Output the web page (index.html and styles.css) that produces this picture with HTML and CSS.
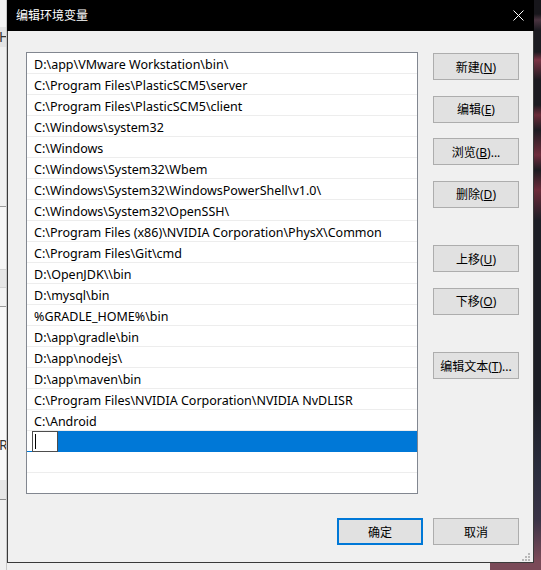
FILE: index.html
```html
<!DOCTYPE html>
<html lang="zh-CN">
<head>
<meta charset="UTF-8" />
<title>编辑环境变量</title>
<link rel="stylesheet" href="styles.css">
</head>
<body>

<div class="behind">
	<div class="strip s1"></div>
	<div class="strip s2"><span>H</span></div>
	<div class="strip s3"></div>
	<div class="strip s4"></div>
	<div class="strip s5"></div>
	<div class="strip s6"></div>
	<div class="strip s7"><span>R</span></div>
	<div class="strip s8"></div>
	<div class="strip s9"></div>
</div>

<div class="dialog">
	<div class="titlebar">
		<span class="title">编辑环境变量</span>
		<svg class="close" width="11" height="11" viewBox="0 0 11 11">
			<path d="M0.5 0.5 L10.5 10.5 M10.5 0.5 L0.5 10.5" stroke="#fff" stroke-width="1" fill="none"/>
		</svg>
	</div>

	<div class="content">
		<div class="main">
			<ul class="pathlist">
				<li>D:\app\VMware Workstation\bin\</li>
				<li>C:\Program Files\PlasticSCM5\server</li>
				<li>C:\Program Files\PlasticSCM5\client</li>
				<li>C:\Windows\system32</li>
				<li>C:\Windows</li>
				<li>C:\Windows\System32\Wbem</li>
				<li>C:\Windows\System32\WindowsPowerShell\v1.0\</li>
				<li>C:\Windows\System32\OpenSSH\</li>
				<li>C:\Program Files (x86)\NVIDIA Corporation\PhysX\Common</li>
				<li>C:\Program Files\Git\cmd</li>
				<li>D:\OpenJDK\\bin</li>
				<li>D:\mysql\bin</li>
				<li>%GRADLE_HOME%\bin</li>
				<li>D:\app\gradle\bin</li>
				<li>D:\app\nodejs\</li>
				<li>D:\app\maven\bin</li>
				<li>C:\Program Files\NVIDIA Corporation\NVIDIA NvDLISR</li>
				<li>C:\Android</li>
				<li class="selected"><span class="editbox"><span class="caret"></span></span></li>
				<li></li>
				<li></li>
			</ul>

			<div class="side">
				<button>新建(<u>N</u>)</button>
				<button>编辑(<u>E</u>)</button>
				<button>浏览(<u>B</u>)...</button>
				<button>删除(<u>D</u>)</button>
				<button class="spaced">上移(<u>U</u>)</button>
				<button>下移(<u>O</u>)</button>
				<button class="spaced">编辑文本(<u>T</u>)...</button>
			</div>
		</div>

		<div class="footer">
			<button class="default">确定</button>
			<button>取消</button>
		</div>
	</div>

	<svg class="grip" width="8" height="8" viewBox="0 0 8 8">
		<rect x="6" y="0" width="2" height="2"/>
		<rect x="3" y="3" width="2" height="2"/>
		<rect x="6" y="3" width="2" height="2"/>
		<rect x="0" y="6" width="2" height="2"/>
		<rect x="3" y="6" width="2" height="2"/>
		<rect x="6" y="6" width="2" height="2"/>
	</svg>
</div>

</body>
</html>
```

FILE: styles.css
```css
* {
	margin: 0;
	padding: 0;
	box-sizing: border-box;
}

body {
	display: flex;
	height: 570px;
	overflow: hidden;
	font: 12px "Noto Sans", "Noto Sans CJK SC", sans-serif;
	color: #000;
	/* window behind the dialog on the left, wallpaper on the right */
	background:
		linear-gradient(90deg, #f0f0f0 490px, transparent 490px),
		linear-gradient(180deg, #17161b 0, #17161b 14px, #4a3440 20px, #1c1b21 30px, #1c1b21 52px,
			#7a3344 60px, #1b1a20 80px, #1b1a20 105px, #6a2a38 115px, #1d1c22 130px,
			#6f2c3c 155px, #1c1c22 170px, #6d2b3a 190px, #1d1e26 220px, #1d1e26 400px,
			#2a2d3d 470px, #3a3346 520px, #7a4a58 560px);
}

/* the window underneath */
.behind {
	width: 7px;
	flex: none;
	display: flex;
	flex-direction: column;
	overflow: hidden;
	border-right: 1px solid #c8c8c8;
}

.strip {
	flex: none;
	font-size: 14px;
	line-height: 20px;
	color: #333;
}

.s1 { height: 27px; background: #f3f3f3; }
.s2 { height: 20px; background: #e4e4e4; }
.s3 { height: 160px; background: #f0f0f0; border-bottom: 1px solid #9c9c9c; }
.s4 { height: 63px; background: #f6f6f6; border-bottom: 1px solid #d4d4d4; }
.s5 { height: 18px; background: #e6e6e6; border-bottom: 1px solid #d4d4d4; }
.s6 { height: 19px; background: #f3f3f3; border-bottom: 1px solid #9c9c9c; }
.s7 { height: 173px; background: #f8f8f8; padding-top: 128px; }
.s8 { height: 20px; background: #e6e6e6; border-bottom: 1px solid #8c8c8c; }
.s9 { flex: 1; background: #f0f0f0; }

.s2 span, .s7 span {
	display: block;
	margin-left: -1px;
}

/* dialog */
.dialog {
	width: 527px;
	height: 563px;
	flex: none;
	display: flex;
	flex-direction: column;
	background: #f0f0f0;
	border: 1px solid #3a3a3a;
	border-top: none;
}

.titlebar {
	height: 31px;
	flex: none;
	display: flex;
	align-items: center;
	justify-content: space-between;
	padding: 0 10px 1px 8px;
	margin: 0 -1px;
	background: #000;
	color: #fff;
}

.title {
	font-size: 12px;
	padding-left: 1px;
}

.content {
	flex: 1;
	padding: 21px 14px 0 18px;
}

.main {
	display: flex;
	gap: 15px;
}

.pathlist {
	list-style: none;
	width: 392px;
	height: 442px;
	overflow: hidden;
	background: #fff;
	border: 1px solid #828790;
	font-size: 12.5px;
}

.pathlist li {
	height: 21px;
	line-height: 20px;
	padding: 2px 0 0 7px;
	border-bottom: 1px solid #ededed;
	white-space: nowrap;
}

.pathlist li.selected {
	padding: 0 0 0 5px;
	background: linear-gradient(90deg, #fff 5px, #0078d7 5px);
	border-bottom-color: #0078d7;
}

.editbox {
	display: block;
	width: 26px;
	height: 21px;
	padding: 2px 0 0 2px;
	background: #fff;
	border: 1px solid #4d4d4d;
}

.caret {
	display: block;
	width: 1px;
	height: 15px;
	background: #000;
}

.side {
	width: 86px;
	margin-top: 1px;
	display: flex;
	flex-direction: column;
	gap: 15.5px;
}

.side .spaced {
	margin-top: 22px;
}

button {
	height: 27px;
	font: inherit;
	color: #000;
	background: #e1e1e1;
	border: 1px solid #adadad;
	text-align: center;
}

button u {
	text-underline-offset: 1px;
}

button.default {
	border: 2px solid #0078d7;
}

.footer {
	display: flex;
	justify-content: flex-end;
	gap: 10px;
	margin-top: 24px;
}

.footer button {
	width: 86px;
}

.grip {
	align-self: flex-end;
	margin: 0 3px 1px 0;
	fill: #b8b8b8;
}
```
